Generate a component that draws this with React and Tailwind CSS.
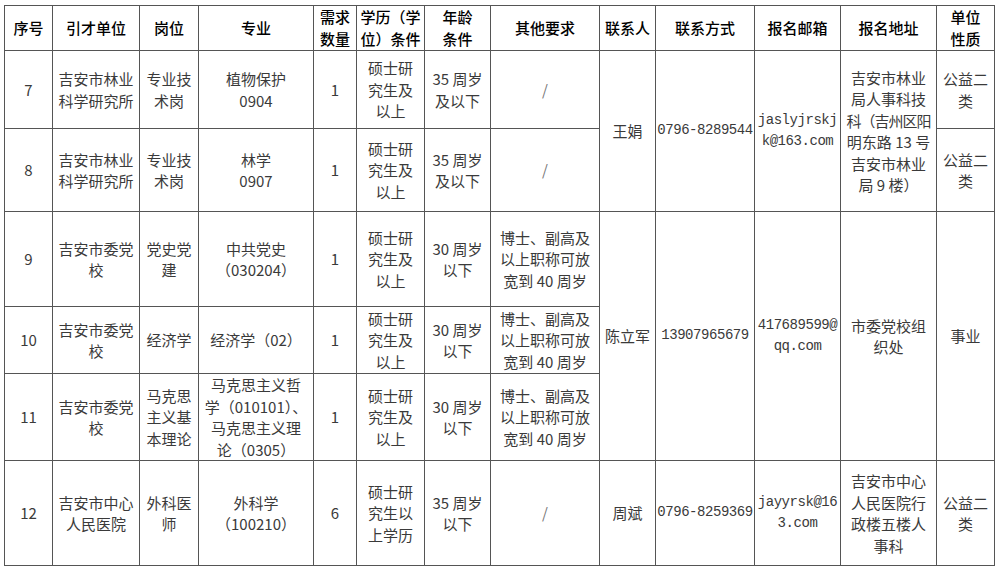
import clsx from "clsx";

const Lines = ({ lines, mono }) => (
  <div
    className={clsx(
      mono && "font-['Liberation_Mono',monospace] text-[14px] tracking-[-0.45px]"
    )}
  >
    {lines.map((l, i) => (
      <div key={i}>{l}</div>
    ))}
  </div>
);

const Td = ({ children, rowSpan, className }) => (
  <td
    rowSpan={rowSpan}
    className={clsx(
      "border border-[#555] p-0 text-center align-middle whitespace-nowrap",
      className
    )}
  >
    {children}
  </td>
);

const widths = [48, 87, 59, 115, 43, 68, 66, 109, 56, 99, 86, 96, 58];

const head = [
  ["序号"],
  ["引才单位"],
  ["岗位"],
  ["专业"],
  ["需求", "数量"],
  ["学历（学", "位）条件"],
  ["年龄", "条件"],
  ["其他要求"],
  ["联系人"],
  ["联系方式"],
  ["报名邮箱"],
  ["报名地址"],
  ["单位", "性质"],
];

const other = ["博士、副高及", "以上职称可放", "宽到 40 周岁"];
const slash = <span className="text-[#777]">/</span>;

export default function App() {
  return (
    <div className="min-h-screen bg-white pl-[4px] pt-[5px] font-['Noto_Sans_CJK_SC',sans-serif] text-[15px] leading-[21.5px] text-[#3a3a3a]">
      <table className="table-fixed border-collapse">
        <colgroup>
          {widths.map((w, i) => (
            <col key={i} style={{ width: w }} />
          ))}
        </colgroup>
        <tbody>
          <tr className="h-[44px]">
            {head.map((h, i) => (
              <Td key={i} className="text-[15px] leading-[22px] font-medium text-black">
                <Lines lines={h} />
              </Td>
            ))}
          </tr>

          <tr className="h-[78px]">
            <Td>7</Td>
            <Td><Lines lines={["吉安市林业", "科学研究所"]} /></Td>
            <Td><Lines lines={["专业技", "术岗"]} /></Td>
            <Td><Lines lines={["植物保护", "0904"]} /></Td>
            <Td>1</Td>
            <Td><Lines lines={["硕士研", "究生及", "以上"]} /></Td>
            <Td><Lines lines={["35 周岁", "及以下"]} /></Td>
            <Td>{slash}</Td>
            <Td rowSpan={2}>王娟</Td>
            <Td rowSpan={2}><Lines mono lines={["0796-8289544"]} /></Td>
            <Td rowSpan={2}><Lines mono lines={["jaslyjrskj", "k@163.com"]} /></Td>
            <Td rowSpan={2}>
              <Lines
                lines={[
                  "吉安市林业",
                  "局人事科技",
                  <span className="tracking-[-1px]">科（吉州区阳</span>,
                  "明东路 13 号",
                  "吉安市林业",
                  "局 9 楼）",
                ]}
              />
            </Td>
            <Td><Lines lines={["公益二", "类"]} /></Td>
          </tr>

          <tr className="h-[83px]">
            <Td>8</Td>
            <Td><Lines lines={["吉安市林业", "科学研究所"]} /></Td>
            <Td><Lines lines={["专业技", "术岗"]} /></Td>
            <Td><Lines lines={["林学", "0907"]} /></Td>
            <Td>1</Td>
            <Td><Lines lines={["硕士研", "究生及", "以上"]} /></Td>
            <Td><Lines lines={["35 周岁", "及以下"]} /></Td>
            <Td>{slash}</Td>
            <Td><Lines lines={["公益二", "类"]} /></Td>
          </tr>

          <tr className="h-[95px]">
            <Td>9</Td>
            <Td><Lines lines={["吉安市委党", "校"]} /></Td>
            <Td><Lines lines={["党史党", "建"]} /></Td>
            <Td><Lines lines={["中共党史", "（030204）"]} /></Td>
            <Td>1</Td>
            <Td><Lines lines={["硕士研", "究生及", "以上"]} /></Td>
            <Td><Lines lines={["30 周岁", "以下"]} /></Td>
            <Td><Lines lines={other} /></Td>
            <Td rowSpan={3}>陈立军</Td>
            <Td rowSpan={3}><Lines mono lines={["13907965679"]} /></Td>
            <Td rowSpan={3}><Lines mono lines={["417689599@", "qq.com"]} /></Td>
            <Td rowSpan={3}><Lines lines={["市委党校组", "织处"]} /></Td>
            <Td rowSpan={3}>事业</Td>
          </tr>

          <tr className="h-[67px]">
            <Td>10</Td>
            <Td><Lines lines={["吉安市委党", "校"]} /></Td>
            <Td>经济学</Td>
            <Td>经济学（02）</Td>
            <Td>1</Td>
            <Td><Lines lines={["硕士研", "究生及", "以上"]} /></Td>
            <Td><Lines lines={["30 周岁", "以下"]} /></Td>
            <Td><Lines lines={other} /></Td>
          </tr>

          <tr className="h-[86px]">
            <Td>11</Td>
            <Td><Lines lines={["吉安市委党", "校"]} /></Td>
            <Td><Lines lines={["马克思", "主义基", "本理论"]} /></Td>
            <Td>
              <Lines
                lines={[
                  "马克思主义哲",
                  "学（010101）、",
                  "马克思主义理",
                  "论（0305）",
                ]}
              />
            </Td>
            <Td>1</Td>
            <Td><Lines lines={["硕士研", "究生及", "以上"]} /></Td>
            <Td><Lines lines={["30 周岁", "以下"]} /></Td>
            <Td><Lines lines={other} /></Td>
          </tr>

          <tr className="h-[105px]">
            <Td>12</Td>
            <Td><Lines lines={["吉安市中心", "人民医院"]} /></Td>
            <Td><Lines lines={["外科医", "师"]} /></Td>
            <Td><Lines lines={["外科学", "（100210）"]} /></Td>
            <Td>6</Td>
            <Td><Lines lines={["硕士研", "究生以", "上学历"]} /></Td>
            <Td><Lines lines={["35 周岁", "以下"]} /></Td>
            <Td>{slash}</Td>
            <Td>周斌</Td>
            <Td><Lines mono lines={["0796-8259369"]} /></Td>
            <Td><Lines mono lines={["jayyrsk@16", "3.com"]} /></Td>
            <Td><Lines lines={["吉安市中心", "人民医院行", "政楼五楼人", "事科"]} /></Td>
            <Td><Lines lines={["公益二", "类"]} /></Td>
          </tr>
        </tbody>
      </table>
    </div>
  );
}
